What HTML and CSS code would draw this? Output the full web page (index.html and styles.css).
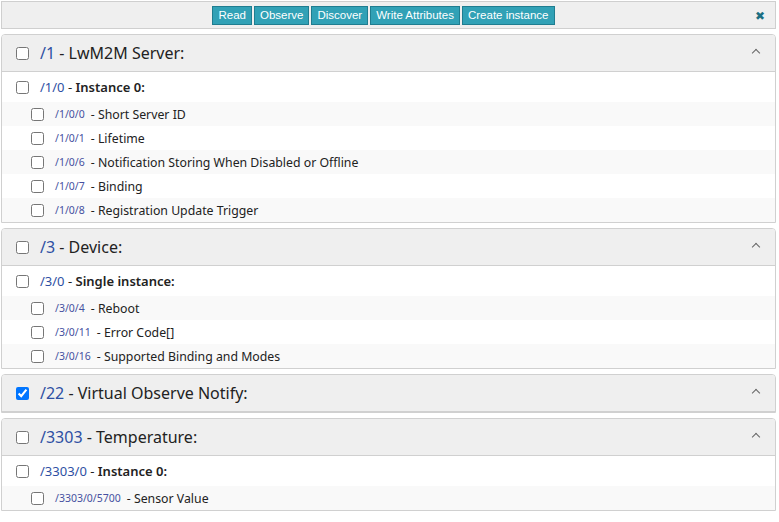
FILE: index.html
```html
<!DOCTYPE html>
<html>
<head>
<meta charset="utf-8">
<link rel="stylesheet" href="styles.css">
</head>
<body>
<div class="page">
  <div class="toolbar">
    <div class="btns">
      <button class="btn">Read</button>
      <button class="btn">Observe</button>
      <button class="btn">Discover</button>
      <button class="btn">Write Attributes</button>
      <button class="btn">Create instance</button>
    </div>
    <span class="close">&#x2716;</span>
  </div>

  <div class="panel">
    <div class="phead">
      <input type="checkbox" class="cb">
      <span class="ptitle"><span class="link">/1</span> - LwM2M Server:</span>
      <span class="chev"></span>
    </div>
    <div class="inst"><input type="checkbox" class="cb"><span class="itext"><span class="link">/1/0</span> - <b>Instance 0:</b></span></div>
    <div class="res"><input type="checkbox" class="cb"><span class="rpath">/1/0/0</span><span class="rname">- Short Server ID</span></div>
    <div class="res"><input type="checkbox" class="cb"><span class="rpath">/1/0/1</span><span class="rname">- Lifetime</span></div>
    <div class="res"><input type="checkbox" class="cb"><span class="rpath">/1/0/6</span><span class="rname">- Notification Storing When Disabled or Offline</span></div>
    <div class="res"><input type="checkbox" class="cb"><span class="rpath">/1/0/7</span><span class="rname">- Binding</span></div>
    <div class="res"><input type="checkbox" class="cb"><span class="rpath">/1/0/8</span><span class="rname">- Registration Update Trigger</span></div>
  </div>

  <div class="panel">
    <div class="phead">
      <input type="checkbox" class="cb">
      <span class="ptitle"><span class="link">/3</span> - Device:</span>
      <span class="chev"></span>
    </div>
    <div class="inst"><input type="checkbox" class="cb"><span class="itext"><span class="link">/3/0</span> - <b>Single instance:</b></span></div>
    <div class="res"><input type="checkbox" class="cb"><span class="rpath">/3/0/4</span><span class="rname">- Reboot</span></div>
    <div class="res"><input type="checkbox" class="cb"><span class="rpath">/3/0/11</span><span class="rname">- Error Code[]</span></div>
    <div class="res"><input type="checkbox" class="cb"><span class="rpath">/3/0/16</span><span class="rname">- Supported Binding and Modes</span></div>
  </div>

  <div class="panel">
    <div class="phead">
      <input type="checkbox" class="cb" checked>
      <span class="ptitle"><span class="link">/22</span> - Virtual Observe Notify:</span>
      <span class="chev"></span>
    </div>
  </div>

  <div class="panel">
    <div class="phead">
      <input type="checkbox" class="cb">
      <span class="ptitle"><span class="link">/3303</span> - Temperature:</span>
      <span class="chev"></span>
    </div>
    <div class="inst"><input type="checkbox" class="cb"><span class="itext"><span class="link">/3303/0</span> - <b>Instance 0:</b></span></div>
    <div class="res"><input type="checkbox" class="cb"><span class="rpath">/3303/0/5700</span><span class="rname">- Sensor Value</span></div>
  </div>
</div>
</body>
</html>
```

FILE: styles.css
```css
* { box-sizing: border-box; }
html, body { margin: 0; padding: 0; background: #fff; }
body {
  font-family: "Noto Sans", "Open Sans", sans-serif;
  color: #222;
}
.page {
  width: 777px;
  padding: 1px 1px 0 1px;
}
.toolbar {
  position: relative;
  height: 28px;
  border: 1px solid #cfcfcf;
  background: #efefef;
  display: flex;
  align-items: center;
  justify-content: center;
}
.btns { display: flex; gap: 2px; margin-left: -10px; }
.btn {
  font-family: "Liberation Sans", sans-serif;
  font-size: 11.5px;
  color: #fff;
  background: #31a1b6;
  border: 1px solid #1f7d90;
  height: 19px;
  padding: 0 5px;
  line-height: 16px;
  border-radius: 0;
}
.close {
  position: absolute;
  right: 10px;
  top: 5px;
  font-size: 12px;
  color: #1c6f82;
}
.panel {
  border: 1px solid #d0d0d0;
  border-radius: 4px 4px 0 0;
  margin-top: 5px;
  overflow: hidden;
}
.phead {
  height: 37px;
  background: #efefef;
  border-bottom: 1px solid #d0d0d0;
  display: flex;
  align-items: center;
  padding-left: 14px;
  position: relative;
}
.phead .ptitle { font-size: 16px; margin-left: 11px; color: #222; }
.cb { margin: 0; width: 13px; height: 13px; }
.link { color: #2e4fa3; }
.chev {
  position: absolute;
  right: 16px;
  top: 15px;
  width: 6px;
  height: 6px;
  border-left: 1.6px solid #666;
  border-top: 1.6px solid #666;
  transform: rotate(45deg);
}
.inst {
  height: 30px;
  display: flex;
  align-items: center;
  padding-left: 14px;
  font-size: 13px;
}
.inst .itext { margin-left: 11px; }
.inst b { font-weight: 600; }
.res {
  height: 24px;
  display: flex;
  align-items: center;
  padding-left: 29px;
  font-size: 12.3px;
}
.res:nth-child(odd) { background: #f9f9f9; }
.rpath { color: #4650a0; font-size: 10.5px; margin-left: 11px; margin-right: 6px; }
.rname { color: #222; }
```
